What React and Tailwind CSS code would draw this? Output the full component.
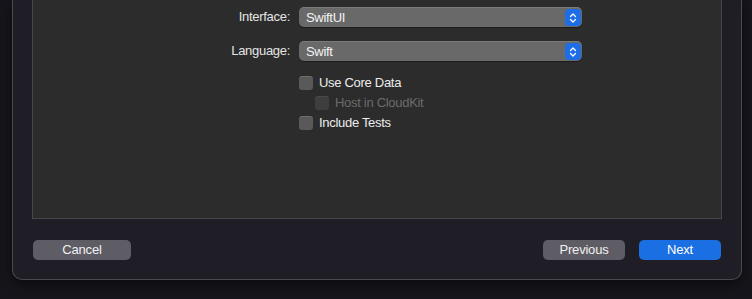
import React from "react";

const font = { fontFamily: '"Liberation Sans", Arial, sans-serif' };

const Stepper = () => (
  <div className="flex h-[17px] w-[16px] items-center justify-center rounded-[4px] bg-[#1d6ee6]">
    <svg width="8" height="12" viewBox="0 0 8 12" fill="none">
      <path
        d="M1.5 4.5 L4 2 L6.5 4.5"
        stroke="white"
        strokeWidth="1.3"
        strokeLinecap="round"
        strokeLinejoin="round"
      />
      <path
        d="M1.5 7.5 L4 10 L6.5 7.5"
        stroke="white"
        strokeWidth="1.3"
        strokeLinecap="round"
        strokeLinejoin="round"
      />
    </svg>
  </div>
);

const PopupRow = ({ label, value }) => (
  <div className="flex items-center">
    <div className="w-[258px] pr-[1px] text-right text-[13px] tracking-[-0.3px] text-[#e4e4e4]">
      {label}
    </div>
    <div className="ml-[8px] flex h-[20px] w-[283px] items-center justify-between rounded-[5px] border-t border-[#7a7a7a] bg-[#696969] pl-[7px] pr-[1px] shadow-[0_1px_1px_rgba(0,0,0,0.35)]">
      <span className="text-[13px] tracking-[-0.3px] text-[#f4f4f4]">{value}</span>
      <Stepper />
    </div>
  </div>
);

const Checkbox = ({ label, disabled }) => (
  <div className="flex h-[14px] items-center gap-[6px]">
    <div
      className={`h-[14px] w-[14px] rounded-[3px] border-t ${
        disabled
          ? "border-[#4a4a4a] bg-[#3e3e3e]"
          : "border-[#6e6e6e] bg-[#595959]"
      }`}
    />
    <span
      className={`text-[13px] leading-[14px] tracking-[-0.3px] ${
        disabled ? "text-[#6b6b6b]" : "text-[#ececec]"
      }`}
    >
      {label}
    </span>
  </div>
);

export default function App() {
  return (
    <div
      className="h-[299px] w-[752px] overflow-hidden bg-[#16151b] pl-[12px]"
      style={font}
    >
      <div className="flex h-[280px] w-[730px] flex-col rounded-b-[10px] border-x border-b border-[#4a4950] bg-[#1f1e27] shadow-[0_4px_12px_rgba(0,0,0,0.5)]">
        {/* form panel */}
        <div className="mx-[19px] h-[219px] border-x border-b border-[#46464a] bg-[#2c2c2c]">
          <div className="flex flex-col pt-[7px]">
            <PopupRow label="Interface:" value="SwiftUI" />
            <div className="mt-[14px]">
              <PopupRow label="Language:" value="Swift" />
            </div>
            <div className="ml-[266px] mt-[15px] flex flex-col gap-[6px]">
              <Checkbox label="Use Core Data" />
              <div className="ml-[16px]">
                <Checkbox label="Host in CloudKit" disabled />
              </div>
              <Checkbox label="Include Tests" />
            </div>
          </div>
        </div>

        {/* buttons */}
        <div className="mt-[21px] flex items-center px-[20px]">
          <button className="h-[20px] w-[98px] rounded-[5px] bg-[#5e5d65] text-[13px] tracking-[-0.2px] text-[#f0f0f0]">
            Cancel
          </button>
          <div className="ml-auto flex gap-[14px]">
            <button className="h-[20px] w-[82px] rounded-[5px] bg-[#5e5d65] text-[13px] tracking-[-0.2px] text-[#f0f0f0]">
              Previous
            </button>
            <button className="h-[20px] w-[82px] rounded-[5px] bg-[#1a6fe3] text-[13px] tracking-[-0.2px] text-white">
              Next
            </button>
          </div>
        </div>
      </div>
    </div>
  );
}
